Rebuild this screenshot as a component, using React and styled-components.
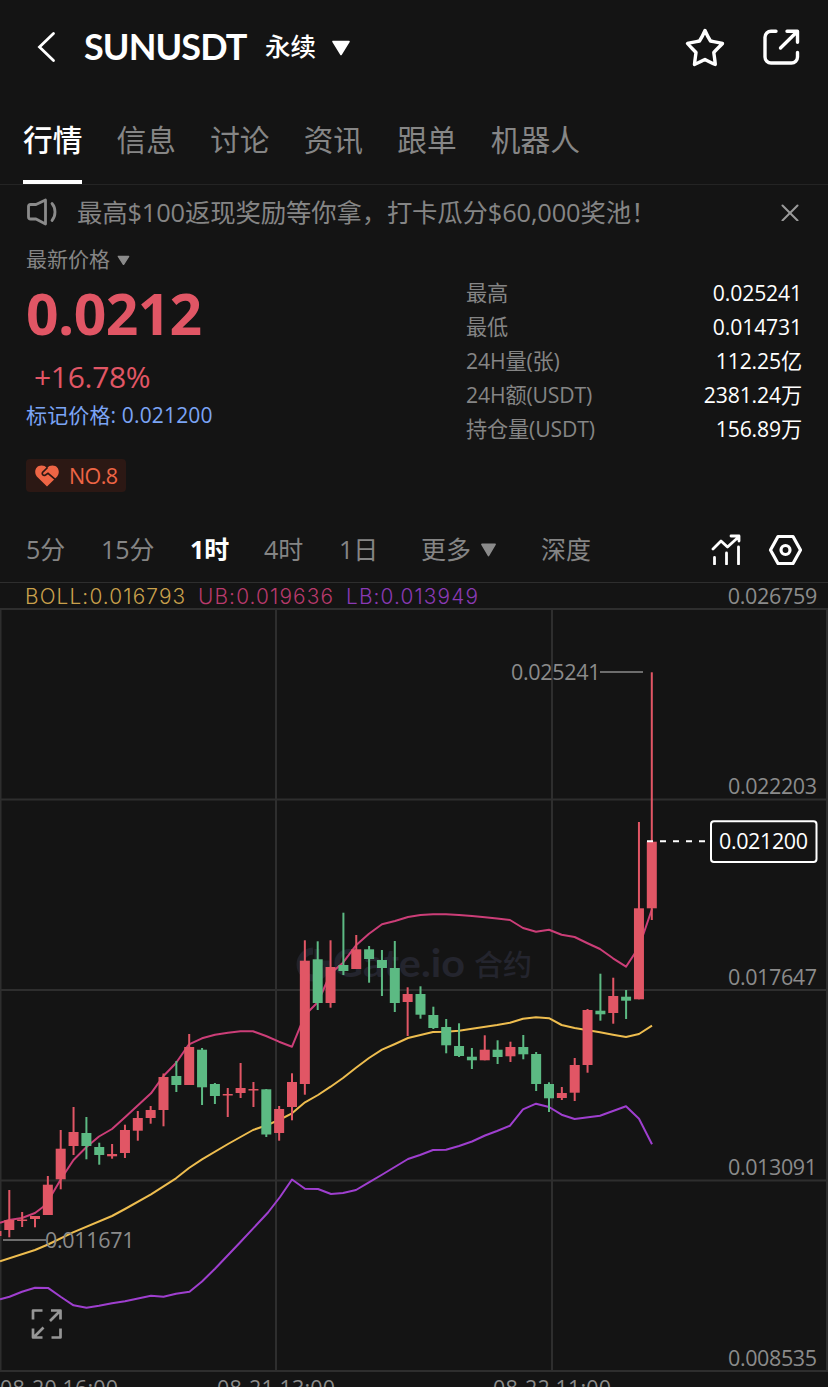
import React, { useState } from 'react'
import styled, { createGlobalStyle } from 'styled-components'

const tabs = ['行情', '信息', '讨论', '资讯', '跟单', '机器人']

const stats = [
  { label: '最高', value: '0.025241' },
  { label: '最低', value: '0.014731' },
  { label: '24H量(张)', value: '112.25亿' },
  { label: '24H额(USDT)', value: '2381.24万' },
  { label: '持仓量(USDT)', value: '156.89万' },
]

const periods = [
  { name: '5分', width: 75 },
  { name: '15分', width: 89 },
  { name: '1时', width: 74 },
  { name: '4时', width: 75 },
  { name: '1日', width: 82 },
  { name: '更多', width: 120, arrow: true },
  { name: '深度', width: 60 },
]

// [body top, body bottom, high, low, rising]
const candles = [
  [1231, 1236, 1231, 1236, 1],
  [1220, 1230, 1190, 1237.3, 1],
  [1219.5, 1221, 1212, 1227, 1],
  [1216, 1219, 1216, 1227.3, 1],
  [1184.7, 1215, 1176, 1215, 1],
  [1148.7, 1179.3, 1130, 1189.3, 1],
  [1132, 1146, 1107, 1155, 1],
  [1133, 1146, 1117, 1159.3, 0],
  [1147, 1155, 1142.7, 1164.7, 0],
  [1154, 1156.3, 1144, 1158.7, 1],
  [1130, 1153, 1124.7, 1158, 1],
  [1118, 1130.7, 1111, 1140.7, 1],
  [1110, 1118, 1106, 1123.7, 1],
  [1077, 1110, 1073.5, 1126.3, 1],
  [1076, 1085, 1061, 1092, 0],
  [1047, 1085, 1034, 1085, 1],
  [1049.7, 1087.3, 1048, 1105, 0],
  [1084, 1096, 1083, 1104, 0],
  [1094, 1095.5, 1088, 1117, 1],
  [1088, 1093, 1063, 1098, 1],
  [1089, 1090.5, 1082, 1107, 1],
  [1089.3, 1134.5, 1089, 1137, 0],
  [1109, 1133, 1106, 1140.7, 1],
  [1082, 1107, 1073.3, 1120.3, 1],
  [960.7, 1084, 940.3, 1094.7, 1],
  [959.3, 1003, 941.3, 1010, 0],
  [967, 1003, 940.3, 1007.7, 1],
  [965, 971, 912.7, 975, 0],
  [949.3, 969, 935, 969, 1],
  [949.3, 959, 946, 982.7, 0],
  [960, 968, 950, 996, 0],
  [968, 1003, 941, 1012, 0],
  [994, 1002, 987.3, 1036, 1],
  [994, 1014.7, 986.3, 1018.7, 0],
  [1015, 1028, 1006.7, 1029, 0],
  [1027, 1045.3, 1019, 1053.3, 0],
  [1046, 1056, 1023.3, 1057, 0],
  [1056.7, 1060.3, 1048, 1069, 0],
  [1049.7, 1060.3, 1035.3, 1060.3, 1],
  [1049.7, 1057, 1040.3, 1064, 0],
  [1047, 1056.3, 1041.7, 1062, 1],
  [1047, 1054.3, 1035, 1059.3, 0],
  [1054, 1084, 1052, 1091, 0],
  [1084, 1098.3, 1082.3, 1112, 0],
  [1093, 1098, 1087, 1100, 1],
  [1065, 1092.7, 1058, 1101, 1],
  [1010, 1065, 1009, 1072.7, 1],
  [1010.7, 1014.3, 973.7, 1020.7, 0],
  [996, 1013, 977.7, 1023.7, 1],
  [996.7, 1000.7, 990, 1019, 0],
  [908.3, 999.3, 822, 999.3, 1],
  [841.7, 908.3, 672.3, 920, 1],
]

const upper = '0,1222.7 9,1220 22,1218 35,1213 43,1207 48,1201 61,1179 73.5,1160 86.5,1147 99,1136.5 112,1129 125,1117.3 138,1105.3 151,1093.3 163.5,1076 176,1063 189,1044.3 202,1038.3 215,1034.7 228,1032.7 240.5,1031.3 253,1031.3 266,1036 279,1041.7 292,1046.7 305,1015 318,1002 330.5,973.5 343,962.7 356,945.3 369,933.7 382,924.3 395,921 408,917 420.5,915 433,914.3 446,914.3 459,915 472,916 485,917.2 497,918.6 510,920 523,928 536,931.7 549,929.7 561.6,934.7 574.6,937 587,943 600,949 613,958.3 626,966.7 639,947 652,909'
const middle = '0,1261.3 35,1250 48,1244.5 73,1232.3 112,1216 125,1209 151,1194.3 176,1178.3 189,1168 202,1159.3 228,1144 253,1130 266,1125.5 279,1120 292,1113.3 305,1102.3 318,1095 330.6,1086.7 343,1078 356,1067.7 369,1058 382,1049.7 395,1044 408,1038 420.5,1035 433,1032 446,1031.7 459,1030.7 472,1028.7 497,1025 510,1022.7 523,1018.7 536,1017.3 549,1018.2 561.6,1025 574.6,1028 600,1032.2 613,1034.7 626,1037 639,1034 652,1025.7'
const lower = '0,1299.3 9.5,1296.7 22,1291.7 35,1287.7 48,1287.9 61,1297 73.5,1305.3 86.5,1307.7 99,1305.7 112,1303.2 125,1301.3 151,1295.7 163.5,1296.7 176,1293.7 189.5,1291.7 202,1281.5 215,1268.7 240,1242.5 268,1212.5 280,1197 292,1179.5 305,1188.7 318,1189 331,1194 343,1193 356,1190 368.5,1182.7 381.5,1175 408,1159 420,1155 433,1150 446,1149.8 459,1146 472,1141.5 485,1135.5 497,1131 510,1125.7 523,1109.3 536,1103.7 549,1107 561.6,1114.7 574.6,1119 600,1115.7 626,1106.3 639,1118.7 652,1144.3'

const gridRows = [609, 799.5, 990, 1180.5, 1371]
const gridCols = [0.5, 276, 552, 827]
const priceMarks = [
  { y: 794, text: '0.022203' },
  { y: 985, text: '0.017647' },
  { y: 1175, text: '0.013091' },
  { y: 1366, text: '0.008535' },
]
const timeMarks = [
  { x: 0, text: '08-20 16:00' },
  { x: 217, text: '08-21 13:00' },
  { x: 493, text: '08-22 11:00' },
]

function Candle({ index, data }) {
  const [top, bottom, high, low, rising] = data
  const x = 9.3 + (index - 1) * 12.85
  return (
    <g fill={rising ? '#e15665' : '#5cba83'}>
      <rect x={x - 1} y={high} width="2" height={low - high} />
      <rect x={x - 5} y={top} width="10" height={bottom - top} />
    </g>
  )
}

function Chart() {
  return (
    <ChartSvg viewBox="0 608 828 779">
      {gridRows.map(y => <line key={y} x1="0" x2="828" y1={y} y2={y} />)}
      {gridCols.map(x => <line key={x} x1={x} x2={x} y1="609" y2="1371" />)}

      <g fill="none" stroke="#22232b" strokeWidth="7">
        <path d="M313 951a13.500 13.500 0 1 0 14 14" />
        <path d="M317 949v14h14" strokeWidth="5" />
      </g>
      <Mark x="333" y="977" textLength="132" lengthAdjust="spacingAndGlyphs">Gate.io</Mark>
      <Mark x="474" y="976" $cjk>合约</Mark>

      <Band $color="#cc3e78" points={upper} />
      <Band $color="#eebd4f" points={middle} />
      <Band $color="#9f3fcf" points={lower} />
      {candles.map((c, i) => <Candle key={i} index={i} data={c} />)}

      <path d="M600 672H643M3 1240H46" stroke="#8b8b8b" strokeWidth="1.6" />
      <path d="M647 841.3H706" stroke="#fff" strokeWidth="2" strokeDasharray="6 7" />
      <Label x="511" y="680" textLength="89.5">0.025241</Label>
      <Label x="45" y="1248" textLength="89.5">0.011671</Label>
      {priceMarks.map(m => <Label key={m.y} x="728" y={m.y} textLength="89">{m.text}</Label>)}
      {timeMarks.map(m => <Label key={m.x} x={m.x} y="1396" textLength="118">{m.text}</Label>)}

      <rect x="711" y="821.3" width="105.5" height="40.7" rx="3" fill="#141414" stroke="#fff" strokeWidth="2" />
      <Label x="719" y="849" textLength="89" $active>0.021200</Label>

      <g fill="none" stroke="#969696" strokeWidth="2.7" strokeLinejoin="round">
        <path d="M33 1319.5v-9h9.500M51 1310.500h9.500v9M50 1321l10-10M33 1328.500v9h9.500M34 1337l9.500-9.500M60.500 1328.500v9h-9" />
      </g>
    </ChartSvg>
  )
}

function App() {
  const [tab, setTab] = useState('行情')
  const [period, setPeriod] = useState('1时')

  return (
    <Page>
      <GlobalStyle />
      <Header>
        <BackIcon viewBox="0 0 20 32">
          <path d="M17.500 2.500 3.500 16 17.500 29.500" />
        </BackIcon>
        <Pair>SUNUSDT</Pair>
        <Contract>永续</Contract>
        <Arrow $w={20} viewBox="0 0 20 17"><path d="M2 2.500h16L10 15.500z" /></Arrow>
        <HeaderIcons>
          <LineIcon $w={40} $h={40} $stroke={3.4} viewBox="0 0 40 40">
            <path d="M20 2.500c1.500 3.500 3.500 7.500 5.500 10.500 4 .8 8 1.500 12 2.500-3 3.200-6 6-8.700 9 .5 4 1.200 8 1.500 12-3.500-1.400-7-3.400-10.300-5-3.500 1.600-7 3.600-10.500 5 .3-4 1-8 1.500-12-2.700-3-5.700-5.800-8.500-9 4-1 8-1.700 12-2.500 2-3 4-7 5.500-10.500z" />
          </LineIcon>
          <LineIcon $w={40} $h={40} $stroke={3.4} viewBox="0 0 40 40">
            <path d="M14 3.200H9a6 6 0 0 0-6 6V29a6 6 0 0 0 6 6h20.500a6 6 0 0 0 6-6v-4.500M25 3.200h10.500v11M35 3.700 18.500 20" />
          </LineIcon>
        </HeaderIcons>
      </Header>

      <Tabs>
        {tabs.map(name => (
          <Tab key={name} $active={tab === name} onClick={() => setTab(name)}>{name}</Tab>
        ))}
      </Tabs>

      <Notice>
        <LineIcon $w={32} $h={30} $stroke={2.8} $color="#8b8b8b" viewBox="0 0 32 30">
          <path d="M4.500 7.500h5.500L19.500 3v24L10 22H4.500q-2 0-2-2V9.500q0-2 2-2zM26 6.500c4 4.500 4 12.500 0 17" />
        </LineIcon>
        <p>最高$100返现奖励等你拿，打卡瓜分$60,000奖池！</p>
        <LineIcon $w={18} $h={18} $stroke={2} $color="#9a9a9a" viewBox="0 0 18 18">
          <path d="M1.500 2.500l15 15M16.500 2.500l-15 15" />
        </LineIcon>
      </Notice>

      <Summary>
        <Quote>
          <QuoteLabel>
            最新价格
            <Arrow $w={15} $color="#8b8b8b" viewBox="0 0 20 17"><path d="M3 4.500h14L10 15.500z" /></Arrow>
          </QuoteLabel>
          <Price>0.0212</Price>
          <Change>+16.78%</Change>
          <MarkPrice>标记价格: 0.021200</MarkPrice>
          <Rank>
            <svg width="26" height="24" viewBox="0 0 26 24">
              <path fill="#ee6545" d="M13 22.500 2.800 12.500C-.5 8 1.500 1.500 7.500 1.500c2.300 0 4 .8 5.500 2.500 1.500-1.700 3.200-2.500 5.500-2.500 6 0 8 6.500 4.700 11z" />
              <path fill="none" stroke="#2c1814" strokeWidth="1.700" d="M13.500 3.500 8.500 8.500c-1 2 1 3.700 3 2.500l2.500-1.700 7.200 6" />
            </svg>
            NO.8
          </Rank>
        </Quote>
        <Stats>
          {stats.map(s => (
            <StatRow key={s.label}>
              <span>{s.label}</span>
              <b>{s.value}</b>
            </StatRow>
          ))}
        </Stats>
      </Summary>

      <Periods>
        {periods.map(p => (
          <Period key={p.name} $w={p.width} $active={period === p.name} onClick={() => setPeriod(p.name)}>
            {p.name}
            {p.arrow && <Arrow $w={19} $color="#8b8b8b" viewBox="0 0 20 17"><path d="M3 3.500h14L10 15.500z" /></Arrow>}
          </Period>
        ))}
        <PeriodIcons>
          <LineIcon $w={32} $h={32} $stroke={2.800} viewBox="0 0 32 32">
            <path d="M3 16 11 8l6.500 6L29 3.500M21 3h8v5M4.500 24.500V31M16.500 20V31M28.500 14V31" />
          </LineIcon>
          <LineIcon $w={34} $h={32} $stroke={3.2} viewBox="0 0 34 32">
            <path d="M10 3.500h15L32.500 17 25 30.500H10L2.500 17z" />
            <circle cx="17.500" cy="17" r="4.500" />
          </LineIcon>
        </PeriodIcons>
      </Periods>

      <Legend>
        <LegendItem $color="#c9a04c" $w={161}>BOLL:0.016793</LegendItem>
        <LegendItem $color="#b83a6c" $w={136}>UB:0.019636</LegendItem>
        <LegendItem $color="#8a3ab4" $w={133}>LB:0.013949</LegendItem>
        <TopPrice>0.026759</TopPrice>
      </Legend>
      <Chart />
    </Page>
  )
}

const GlobalStyle = createGlobalStyle`
  * {
    box-sizing: border-box;
  }
  body {
    margin: 0;
    background: #141414;
  }
  p {
    margin: 0;
  }
`

const Page = styled.div`
  width: 828px;
  height: 1387px;
  overflow: hidden;
  display: flex;
  flex-direction: column;
  background: #141414;
  color: #fff;
  font-family: 'Open Sans', 'Noto Sans CJK SC', sans-serif;
`

const Header = styled.header`
  height: 94px;
  display: flex;
  align-items: center;
  padding: 0 26px 0 36px;
`

const LineIcon = styled.svg`
  width: ${p => p.$w}px;
  height: ${p => p.$h}px;
  flex: none;
  fill: none;
  stroke: ${p => p.$color || '#fff'};
  stroke-width: ${p => p.$stroke};
  stroke-linecap: round;
  stroke-linejoin: round;
`

const BackIcon = styled.svg`
  width: 20px;
  height: 32px;
  fill: none;
  stroke: #fff;
  stroke-width: 2.8;
  stroke-linecap: round;
`

const Arrow = styled.svg`
  width: ${p => p.$w}px;
  fill: ${p => p.$color || '#fff'};
  stroke: ${p => p.$color || '#fff'};
  stroke-width: 1.6;
  stroke-linejoin: round;
`

const Pair = styled.h1`
  margin: -2px 0 0 28px;
  width: 162px;
  font-family: Lato, sans-serif;
  font-size: 36px;
  line-height: 40px;
  font-weight: 700;
  letter-spacing: -0.9px;
  white-space: nowrap;
`

const Contract = styled.span`
  margin: -2px 15px 0 19px;
  font-size: 25.5px;
  line-height: 30px;
  font-weight: 500;
`

const HeaderIcons = styled.div`
  margin: 2px 0 0 auto;
  display: flex;
  gap: 37px;
`

const Tabs = styled.nav`
  height: 91px;
  padding-left: 23px;
  display: flex;
  gap: 34.2px;
  border-bottom: 1px solid #242424;
`

const Tab = styled.div`
  height: 90px;
  padding-top: 24px;
  font-size: 29.7px;
  line-height: 44px;
  font-weight: ${p => (p.$active ? 500 : 400)};
  color: ${p => (p.$active ? '#fff' : '#868686')};
  border-bottom: 4px solid ${p => (p.$active ? '#fff' : 'transparent')};
`

const Notice = styled.div`
  height: 54px;
  padding: 0 29px 0 26px;
  display: flex;
  align-items: center;
  color: #858585;
  font-size: 25.4px;
  line-height: 36px;

  p {
    flex: 1;
    margin-left: 19px;
    letter-spacing: -0.15px;
    white-space: nowrap;
  }
`

const Summary = styled.section`
  height: 277px;
  padding: 0 26px;
  display: flex;
  justify-content: space-between;
`

const Quote = styled.div`
  display: flex;
  flex-direction: column;
  align-items: flex-start;
`

const QuoteLabel = styled.div`
  margin-top: 5px;
  height: 30px;
  display: flex;
  align-items: center;
  gap: 6px;
  color: #858585;
  font-size: 21px;
  line-height: 30px;
`

const Price = styled.div`
  margin-top: 4px;
  color: #e15665;
  font-size: 57px;
  line-height: 70px;
  font-weight: 700;
  letter-spacing: -0.6px;
`

const Change = styled.div`
  margin: 11px 0 0 8px;
  color: #e15665;
  font-size: 30px;
  line-height: 36px;
  letter-spacing: -0.3px;
`

const MarkPrice = styled.div`
  margin-top: 5px;
  color: #7ba4f5;
  font-size: 21px;
  line-height: 30px;
  letter-spacing: 0.15px;
`

const Rank = styled.div`
  margin-top: 29px;
  height: 33px;
  width: 100px;
  padding-left: 8px;
  display: flex;
  align-items: center;
  gap: 9px;
  border-radius: 4px;
  background: #2c1814;
  color: #ee6545;
  font-size: 21.5px;
  line-height: 30px;
  letter-spacing: -0.6px;
  white-space: nowrap;
`

const Stats = styled.div`
  width: 336px;
  padding-top: 37px;
`

const StatRow = styled.div`
  height: 34px;
  display: flex;
  align-items: center;
  justify-content: space-between;
  font-size: 21.2px;
  line-height: 34px;
  letter-spacing: -0.15px;

  span {
    color: #858585;
  }
  b {
    font-weight: 400;
  }
`

const Periods = styled.div`
  height: 66px;
  padding: 0 26px;
  display: flex;
  align-items: center;
`

const Period = styled.div`
  width: ${p => p.$w}px;
  display: flex;
  align-items: center;
  gap: 8px;
  font-size: 25px;
  line-height: 36px;
  font-weight: ${p => (p.$active ? 700 : 400)};
  color: ${p => (p.$active ? '#fff' : '#858585')};
`

const PeriodIcons = styled.div`
  margin-left: auto;
  display: flex;
  gap: 26px;
`

const Legend = styled.div`
  height: 26px;
  padding: 1px 11px 0 25px;
  display: flex;
  align-items: center;
  gap: 12px;
  border-top: 1px solid #2e2e2e;
`

const LegendItem = styled.span`
  width: ${p => p.$w}px;
  padding-top: 2px;
  color: ${p => p.$color};
  font-family: Inter, sans-serif;
  font-size: 20.8px;
  line-height: 26px;
  font-weight: 300;
  letter-spacing: 1.15px;
  white-space: nowrap;
`

const TopPrice = styled.span`
  margin-left: auto;
  color: #8b8b8b;
  font-size: 21.5px;
  line-height: 26px;
  letter-spacing: -0.3px;
`

const ChartSvg = styled.svg`
  display: block;
  width: 828px;
  height: 779px;
  flex: none;

  line {
    stroke: #2e2e2e;
    stroke-width: 2;
  }
`

const Band = styled.polyline`
  fill: none;
  stroke: ${p => p.$color};
  stroke-width: 2;
  stroke-linejoin: round;
`

const Label = styled.text`
  fill: ${p => (p.$active ? '#fff' : '#8b8b8b')};
  font-size: 21.5px;
`

const Mark = styled.text`
  fill: #24252e;
  font-family: Lato, 'Noto Sans CJK SC', sans-serif;
  font-size: ${p => (p.$cjk ? 29 : 39)}px;
  font-weight: ${p => (p.$cjk ? 500 : 700)};
`

export default App
